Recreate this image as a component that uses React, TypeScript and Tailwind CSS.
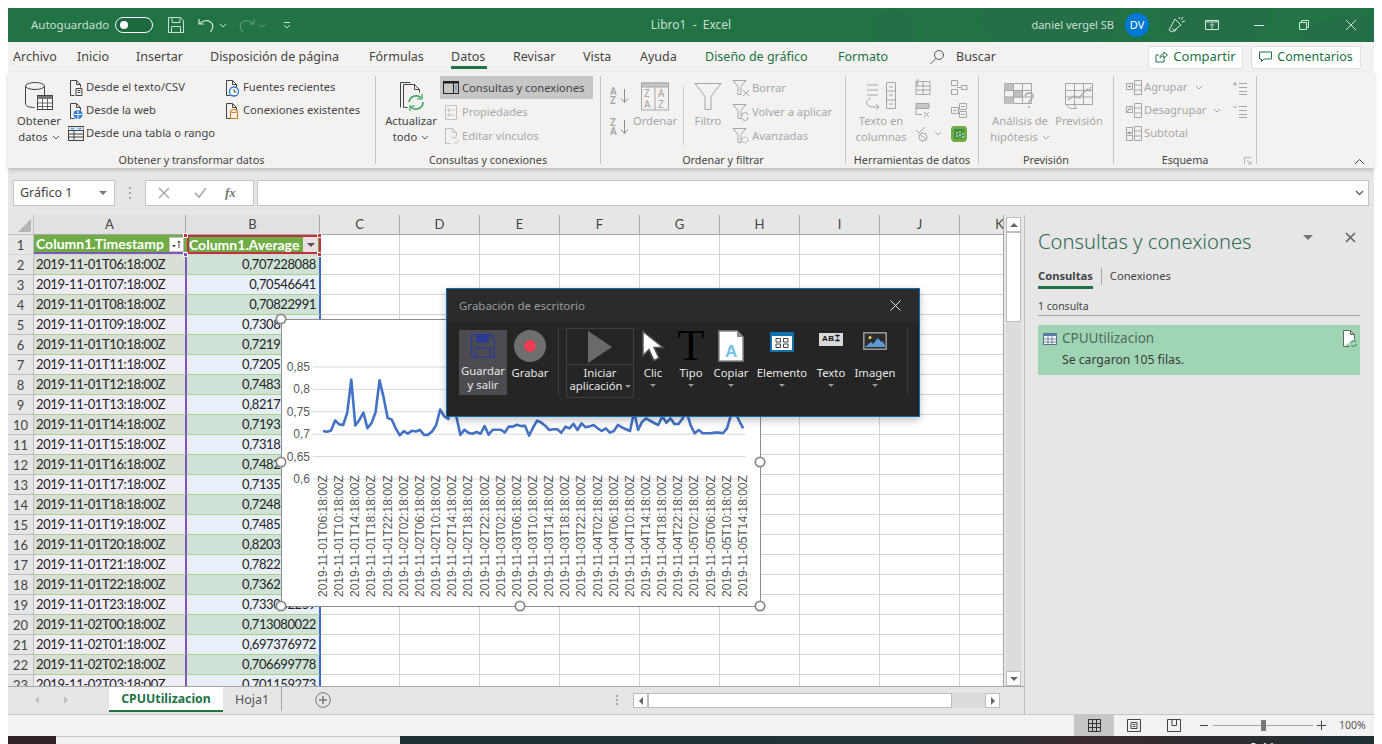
// Ventana de Excel con panel de consultas, gráfico y grabador de escritorio.
import type { ReactNode } from 'react';

const GRAY = '#a6a6a6';
const DARK = '#444444';

function Ico({ w, h, children, className = '' }: { w: number; h: number; children: ReactNode; className?: string }) {
  return (
    <svg width={w} height={h} viewBox={`0 0 ${w} ${h}`} fill="none" className={`shrink-0 ${className}`}>
      {children}
    </svg>
  );
}

function Chev({ color = '#666666' }: { color?: string }) {
  return (
    <Ico w={8} h={5} className="inline-block">
      <path d="M1 1l3 3 3-3" stroke={color} strokeWidth="1" />
    </Ico>
  );
}

/* ---------- iconos de la cinta ---------- */
function DocIco({ color = DARK, children }: { color?: string; children?: ReactNode }) {
  return (
    <Ico w={16} h={18}>
      <path d="M2.5 16.5v-15h6l4 4v3M8.5 1.5v4h4M2.5 16.500h4" stroke={color} />
      {children}
    </Ico>
  );
}

function DatabaseIco() {
  return (
    <Ico w={30} h={30}>
      <ellipse cx="11" cy="5" rx="9.5" ry="3.5" stroke={DARK} />
      <path d="M1.5 5v18c0 2 3 3.5 9 3.5" stroke={DARK} />
      <path d="M20.5 5v9" stroke={DARK} />
      <rect x="13.5" y="14.5" width="15" height="14" fill="#fff" stroke={DARK} />
      <path d="M13.5 15h15v3h-15z" fill="#777" />
      <path d="M13.5 22h15M13.5 25.5h15M18.5 18v11M23.5 18v11" stroke={DARK} strokeWidth=".8" />
    </Ico>
  );
}

function RefreshIco() {
  return (
    <Ico w={30} h={30}>
      <path d="M4.5 26.5v-25h10" stroke={DARK} />
      <path d="M7.5 26.5h4M7.5 26.5v-23h11l5 5v3M18.5 3.5v5h5" stroke={DARK} />
      <path d="M13 21a7 7 0 0 1 12-4M27 21a7 7 0 0 1-12 5" stroke="#31a15c" strokeWidth="1.5" />
      <path d="M26 13v5h-5M14 30v-5h5" stroke="#31a15c" strokeWidth="1.2" />
    </Ico>
  );
}

function TablePaneIco() {
  return (
    <Ico w={16} h={14}>
      <rect x=".5" y=".5" width="15" height="12" stroke="#222" />
      <path d="M0 .5h16v2H0z" fill="#222" />
      <path d="M10.5 1v11" stroke="#222" />
      <path d="M12 5h2M12 7h2M12 9h2" stroke="#2b7cd3" />
    </Ico>
  );
}

function FunnelIco({ mark }: { mark: ReactNode }) {
  return (
    <Ico w={18} h={18}>
      <path d="M1 1.5h13l-5 6v8h-3v-8z" stroke={GRAY} />
      {mark}
    </Ico>
  );
}

function SortIco({ top, bottom }: { top: string; bottom: string }) {
  return (
    <div className="flex h-[19px] items-center">
      <div className="flex w-[10px] flex-col text-[10px] leading-[9px] font-semibold text-[#a6a6a6]">
        <span>{top}</span>
        <span>{bottom}</span>
      </div>
      <Ico w={9} h={16}>
        <path d="M4.5 1v13M1 10.5l3.5 4 3.5-4" stroke="#8a8a8a" />
      </Ico>
    </div>
  );
}

function SmallGrayIco({ kind }: { kind: number }) {
  return (
    <Ico w={18} h={17}>
      {kind === 0 && (
        <>
          <path d="M2 2.5h14v13H2zM9 2.5v13M2 7h14M2 11h14" stroke={GRAY} />
          <path d="M4 0l-2 4h2l-1 3" stroke={GRAY} />
        </>
      )}
      {kind === 1 && (
        <>
          <path d="M2 1.5h13v5H2z" fill="#c6c6c6" stroke={GRAY} />
          <path d="M2 6.5v6h6" stroke={GRAY} />
          <path d="M10 10l5 5M15 10l-5 5" stroke={GRAY} />
        </>
      )}
      {kind === 2 && (
        <>
          <path d="M2 5l3 3 6-6" stroke={GRAY} />
          <circle cx="9" cy="12" r="4" stroke={GRAY} />
          <path d="M6 9.5l6 5" stroke={GRAY} />
        </>
      )}
      {kind === 3 && (
        <>
          <path d="M1.5 1.5h6v5h-6zM1.5 10.5h6v5h-6zM7 8.500h5" stroke={GRAY} />
          <rect x="11.500" y="6.500" width="5.500" height="4" stroke={GRAY} />
        </>
      )}
      {kind === 4 && (
        <>
          <path d="M1.500 5.500h7v6h-7zM9.500 1.500h7v6h-7zM9.500 9.500h7v6h-7z" stroke={GRAY} />
          <path d="M3 8.500h4M11 4.500h4M11 12.500h4" stroke={GRAY} />
        </>
      )}
      {kind === 5 && (
        <>
          <path d="M3 1h12l2 2v11l-2 3H3l-2-3V3z" fill="#70ad47" />
          <path d="M4 4h10v10H4z" fill="#3f8f3f" />
          <path d="M7 7v6M10 6v7M13 8v5" stroke="#fff" strokeDasharray="2 1" />
        </>
      )}
    </Ico>
  );
}

function OutlineIco({ kind }: { kind: number }) {
  return (
    <Ico w={17} h={17}>
      <path d="M9.500 1.500h7v14h-7zM9.500 6h7M9.500 11h7" stroke={GRAY} />
      <rect x="1.500" y={kind === 2 ? 2.5 : 4.5} width="6" height="6" stroke={GRAY} />
      <path d={kind === 1 ? 'M3 7.500h3M2 10l4-5' : 'M3 7.500h3M4.500 6v3'} stroke={GRAY} />
      {kind === 2 && <rect x="1.500" y="10.500" width="6" height="5" stroke={GRAY} />}
    </Ico>
  );
}

function ListIco({ sign }: { sign: string }) {
  return (
    <Ico w={15} h={14}>
      <path d={sign === '+' ? 'M1 3h4M3 1v4' : 'M1 3h4'} stroke={GRAY} />
      <path d="M7 2.500h8M7 6.500h8M7 10.500h8M7 13.500h8" stroke={GRAY} />
    </Ico>
  );
}

/* ---------- piezas de la cinta ---------- */
function BigBtn({ icon, lines, width, disabled, chev }: { icon: ReactNode; lines: string[]; width: string; disabled?: boolean; chev?: boolean }) {
  return (
    <div className={`flex shrink-0 flex-col items-center ${width} ${disabled ? 'text-[#a6a6a6]' : 'text-[#444444]'}`}>
      <div className="flex h-[37px] items-center justify-center pt-[3px]">{icon}</div>
      {lines.map((line, i) => (
        <div key={line} className="flex h-[16px] items-center gap-[4px] leading-[16px] whitespace-nowrap">
          {line}
          {chev && i === lines.length - 1 && <Chev color={disabled ? GRAY : '#555555'} />}
        </div>
      ))}
    </div>
  );
}

function SmallRow({ icon, label, iconBox = 'w-[18px]', h = 'h-[23px]', disabled }: { icon: ReactNode; label: string; iconBox?: string; h?: string; disabled?: boolean }) {
  return (
    <div className={`flex items-center whitespace-nowrap ${h} ${disabled ? 'text-[#a6a6a6]' : 'text-[#444444]'}`}>
      <span className={`flex shrink-0 items-center ${iconBox}`}>{icon}</span>
      {label}
    </div>
  );
}

function Group({ width, label, children, launcher }: { width: string; label: string; children: ReactNode; launcher?: boolean }) {
  return (
    <div className={`relative flex h-[88px] shrink-0 flex-col border-r border-[#c8c6c4] ${width}`}>
      <div className="flex h-[76px]">{children}</div>
      <div className="h-[12px] text-center text-[10.8px] leading-[16px] text-[#444444]">{label}</div>
      {launcher && (
        <svg width="8" height="8" viewBox="0 0 8 8" fill="none" className="absolute right-[4px] bottom-[-1px]">
          <path d="M.5 7V.5H7M3 3l4 4M7 4v3H4" stroke="#b0b0b0" />
        </svg>
      )}
    </div>
  );
}

const TABS = [
  { t: 'Archivo', w: 'w-[64px]' },
  { t: 'Inicio', w: 'w-[59px]' },
  { t: 'Insertar', w: 'w-[74px]' },
  { t: 'Disposición de página', w: 'w-[159px]' },
  { t: 'Fórmulas', w: 'w-[82px]' },
  { t: 'Datos', w: 'w-[62px]', active: true },
  { t: 'Revisar', w: 'w-[70px]' },
  { t: 'Vista', w: 'w-[57px]' },
  { t: 'Ayuda', w: 'w-[65px]' },
  { t: 'Diseño de gráfico', w: 'w-[133px]', green: true },
  { t: 'Formato', w: 'w-[90px]', green: true },
];

function TitleBar() {
  return (
    <div className="relative flex h-[34px] items-center overflow-hidden bg-[#217346] text-[12px] text-[#c9dfd2]">
      {/* trama decorativa del título */}
      <svg width="500" height="34" viewBox="0 0 500 34" className="absolute top-0 right-0" fill="#256f48">
        <ellipse cx="20" cy="28" rx="22" ry="26" />
        <ellipse cx="175" cy="12" rx="70" ry="30" />
        <ellipse cx="340" cy="8" rx="55" ry="34" />
        <ellipse cx="480" cy="30" rx="50" ry="22" />
      </svg>
      <span className="relative ml-[23px] w-[84px] text-[11.5px]">Autoguardado</span>
      <span className="relative flex h-[16px] w-[38px] items-center rounded-full border border-white bg-[#1d6a40] pl-[4px]">
        <span className="h-[8px] w-[8px] rounded-full bg-white" />
      </span>
      <svg width="18" height="18" viewBox="0 0 18 18" fill="none" stroke="#c9dfd2" className="relative ml-[14px]">
        <path d="M1.500 1.500h12l3 3v12h-15zM5 1.500v5h8v-5M4.500 16.500v-6h9v6" />
      </svg>
      <svg width="18" height="16" viewBox="0 0 18 16" fill="none" stroke="#d5e6dc" className="relative ml-[13px]" strokeWidth="1.200">
        <path d="M1 2v5h5M1.500 7c3-4 8-4 11-2s3 6 0 10" />
      </svg>
      <span className="relative ml-[3px]"><Chev color="#c9dfd2" /></span>
      <svg width="18" height="16" viewBox="0 0 18 16" fill="none" stroke="#5b9a78" className="relative ml-[10px]" strokeWidth="1.200">
        <path d="M17 2v5h-5M16.500 7c-3-4-8-4-11-2s-3 6 0 10" />
      </svg>
      <span className="relative ml-[3px]"><Chev color="#5b9a78" /></span>
      <svg width="8" height="8" viewBox="0 0 8 8" fill="none" stroke="#c9dfd2" className="relative ml-[17px]">
        <path d="M1 1.500h6M1 4l3 3 3-3" />
      </svg>
      <span className="absolute left-0 w-[1366px] text-center text-[12px]">Libro1&nbsp; -&nbsp; Excel</span>
      <div className="relative ml-auto flex items-center">
        <span className="text-[11px]">daniel vergel SB</span>
        <span className="ml-[11px] flex h-[24px] w-[24px] items-center justify-center rounded-full bg-[#0078d4] text-[11px] text-white">DV</span>
        <svg width="18" height="18" viewBox="0 0 18 18" fill="none" stroke="#d5e6dc" className="ml-[19px]">
          <path d="M1 14l6-11 6 6-9 7zM4.500 12.500l2 3 2-2M13 4l2-3M14 6l3-1M11 3l.5-2" />
        </svg>
        <svg width="14" height="10" viewBox="0 0 14 10" fill="none" stroke="#d5e6dc" className="ml-[19px]">
          <path d="M.5.500h13v9H.500zM.5 2h13M7 8.500V4M5 5.500L7 3.500l2 2" />
        </svg>
        <span className="ml-[35px] h-[1px] w-[10px] bg-[#d5e6dc]" />
        <svg width="10" height="10" viewBox="0 0 10 10" fill="none" stroke="#d5e6dc" className="ml-[35px]">
          <path d="M.5 2.500h7v7h-7zM2.500 2.500v-2h7v7h-2" />
        </svg>
        <svg width="10" height="10" viewBox="0 0 10 10" fill="none" stroke="#d5e6dc" className="mr-[18px] ml-[37px]">
          <path d="M0 0l10 10M10 0L0 10" />
        </svg>
      </div>
    </div>
  );
}

function TabRow() {
  return (
    <div className="flex h-[30px] items-center bg-[#f3f2f1] text-[12.5px] text-[#444444]">
      <div className="flex pl-[5px]">
        {TABS.map((tab) => (
          <div key={tab.t} className={`relative h-[30px] shrink-0 leading-[30px] whitespace-nowrap ${tab.w} ${tab.green ? 'text-[#217346]' : ''}`}>
            {tab.t}
            {tab.active && <span className="absolute bottom-[3px] left-0 h-[3px] w-[36px] bg-[#217346]" />}
          </div>
        ))}
      </div>
      <svg width="16" height="16" viewBox="0 0 16 16" fill="none" stroke="#555" className="ml-[1px]">
        <circle cx="10" cy="6" r="4.500" />
        <path d="M7 9.500L1.500 15" />
      </svg>
      <span className="ml-[11px] w-[40px]">Buscar</span>
      <div className="ml-[152px] flex h-[23px] w-[95px] items-center justify-center gap-[5px] rounded-[2px] border border-[#e1dfdd] bg-white text-[13px] text-[#217346]">
        <svg width="13" height="12" viewBox="0 0 13 12" fill="none" stroke="#217346">
          <path d="M9 6.500v4.500H1V4h3M5 7c0-3 2-4 4-4V1l3.500 3L9 7V5c-2 0-3 1-4 2z" />
        </svg>
        Compartir
      </div>
      <div className="ml-[8px] flex h-[23px] w-[110px] items-center justify-center gap-[5px] rounded-[2px] border border-[#e1dfdd] bg-white text-[12.5px] text-[#217346]">
        <svg width="13" height="12" viewBox="0 0 13 12" fill="none" stroke="#217346">
          <path d="M.5 1h12v7H5L2.500 10.500V8h-2z" />
        </svg>
        Comentarios
      </div>
    </div>
  );
}

function Ribbon() {
  return (
    <div className="relative z-10 flex h-[96px] items-start bg-[#f3f2f1] pt-[4px] text-[11.2px] shadow-[0_2px_4px_rgba(0,0,0,0.18)]">
      <Group width="w-[368px]" label="Obtener y transformar datos">
        <div className="ml-[6px]">
          <BigBtn width="w-[50px]" icon={<DatabaseIco />} lines={['Obtener', 'datos']} chev />
        </div>
        <div className="ml-[4px] w-[156px]">
          <SmallRow iconBox="w-[18px]" label="Desde el texto/CSV" icon={
            <DocIco><path d="M8 9.500h6v7H8zM9.500 11.500h3M9.500 13.500h3" stroke={DARK} /></DocIco>
          } />
          <SmallRow iconBox="w-[18px]" label="Desde la web" icon={
            <DocIco><circle cx="10" cy="12.500" r="4.500" fill="#2b7cd3" /><path d="M6 12.500h8M10 8v9" stroke="#fff" /></DocIco>
          } />
          <SmallRow iconBox="w-[18px]" label="Desde una tabla o rango" icon={
            <Ico w={16} h={15}>
              <rect x=".5" y=".5" width="15" height="14" stroke={DARK} />
              <path d="M.5 1h15v3H.500z" fill="#d6e8f7" />
              <path d="M3 2l1.500 1L6 2M10 2l1.500 1L13 2" stroke="#2b7cd3" />
              <path d="M.5 4.500h15M.5 8h15M.5 11h15M6 4.500v10" stroke={DARK} />
            </Ico>
          } />
        </div>
        <div>
          <SmallRow iconBox="w-[19px]" label="Fuentes recientes" icon={
            <DocIco><circle cx="10" cy="12.500" r="4.500" fill="#fff" stroke="#2b7cd3" strokeWidth="1.300" /><path d="M10 10v3h2.500" stroke={DARK} /></DocIco>
          } />
          <SmallRow iconBox="w-[19px]" label="Conexiones existentes" icon={
            <DocIco>
              <path d="M6.500 9.500v7h7v-7" stroke="#d9730d" />
              <ellipse cx="10" cy="9" rx="3.500" ry="1.500" stroke="#d9730d" />
            </DocIco>
          } />
        </div>
      </Group>

      <Group width="w-[225px]" label="Consultas y conexiones">
        <div className="ml-[6px]">
          <BigBtn width="w-[58px]" icon={<RefreshIco />} lines={['Actualizar', 'todo']} chev />
        </div>
        <div className="w-[153px]">
          <div className="mb-[1px] h-[23px] bg-[#c6c6c6]">
            <SmallRow h="h-[24px]" iconBox="w-[22px] pl-[3px]" label="Consultas y conexiones" icon={<TablePaneIco />} />
          </div>
          <SmallRow h="h-[24px]" iconBox="w-[22px] pl-[5px]" disabled label="Propiedades" icon={
            <Ico w={12} h={15}>
              <path d="M.5.500h11v14H.500zM3 4h2v2H3zM7 5h3M3 9h2v2H3zM7 10h3" stroke="#c0c0c0" />
            </Ico>
          } />
          <SmallRow h="h-[24px]" iconBox="w-[22px] pl-[5px]" disabled label="Editar vínculos" icon={
            <Ico w={14} h={16}>
              <path d="M.5 15.500v-15h7l4 4v4M7.500.5v4h4M.5 15.500h5" stroke="#c0c0c0" />
              <path d="M7 11a2 2 0 0 1 4 0M13 12a2 2 0 0 1-4 2" stroke="#c0c0c0" />
            </Ico>
          } />
        </div>
      </Group>

      <Group width="w-[245px]" label="Ordenar y filtrar">
        <div className="ml-[9px] flex w-[20px] flex-col pt-[10px]">
          <SortIco top="A" bottom="Z" />
          <div className="h-[12px]" />
          <SortIco top="Z" bottom="A" />
        </div>
        <BigBtn width="w-[50px]" disabled lines={['Ordenar']} icon={
          <Ico w={29} h={29}>
            <path d="M.5 1h27v27H.500z" stroke={GRAY} />
            <path d="M.5 1h27v4H.500z" fill="#c6c6c6" stroke={GRAY} />
            <path d="M14 5v23" stroke={GRAY} />
            <text x="3" y="15" fontSize="10" fill={GRAY}>Z</text>
            <text x="3" y="26" fontSize="10" fill={GRAY}>A</text>
            <text x="17" y="15" fontSize="10" fill={GRAY}>A</text>
            <text x="17" y="26" fontSize="10" fill={GRAY}>Z</text>
          </Ico>
        } />
        <div className="mt-[10px] ml-[3px] h-[59px] w-[1px] bg-[#d0d0d0]" />
        <div className="ml-[4px]">
          <BigBtn width="w-[40px]" disabled lines={['Filtro']} icon={
            <Ico w={28} h={29}>
              <path d="M1 1.500h26l-10 13v13h-6v-13z" stroke={GRAY} />
            </Ico>
          } />
        </div>
        <div className="ml-[4px]">
          <SmallRow h="h-[24px]" iconBox="w-[20px]" disabled label="Borrar" icon={<FunnelIco mark={<path d="M11 11l6 6M17 11l-6 6" stroke={GRAY} />} />} />
          <SmallRow h="h-[24px]" iconBox="w-[20px]" disabled label="Volver a aplicar" icon={<FunnelIco mark={<path d="M10 13a3 3 0 0 1 6-1M16 14a3 3 0 0 1-6 1" stroke={GRAY} />} />} />
          <SmallRow h="h-[24px]" iconBox="w-[20px]" disabled label="Avanzadas" icon={<FunnelIco mark={<circle cx="13" cy="13" r="3" stroke={GRAY} strokeDasharray="2 1" />} />} />
        </div>
      </Group>

      <Group width="w-[133px]" label="Herramientas de datos">
        <div className="ml-[2px]">
          <BigBtn width="w-[66px]" disabled lines={['Texto en', 'columnas']} icon={
            <Ico w={32} h={28}>
              <path d="M2 3h11M2 8h11M2 13h11" stroke={GRAY} />
              <path d="M21.500.5h9v26h-9zM21.500 9h9M21.500 18h9M24 5h4M24 13h4M24 22h4" stroke={GRAY} />
              <path d="M6 16c-6 3-6 7 0 9h8M11 22l3 3-3 3" stroke={GRAY} />
            </Ico>
          } />
        </div>
        <div className="flex w-[36px] flex-col">
          {[0, 1, 2].map((k) => (
            <div key={k} className="flex h-[23px] items-center gap-[2px]">
              <SmallGrayIco kind={k} />
              {k === 2 && <Chev color={GRAY} />}
            </div>
          ))}
        </div>
        <div className="flex flex-col">
          {[3, 4, 5].map((k) => (
            <div key={k} className="flex h-[23px] items-center">
              <SmallGrayIco kind={k} />
            </div>
          ))}
        </div>
      </Group>

      <Group width="w-[135px]" label="Previsión">
        <div className="ml-[6px]">
          <BigBtn width="w-[70px]" disabled lines={['Análisis de', 'hipótesis']} chev icon={
            <Ico w={32} h={28}>
              <path d="M.5 1.500h27v20H.500z" stroke={GRAY} />
              <path d="M.5 1.500h9v7h-9zM.5 15h9v7h-9zM9.500 8.500h9v7h-9z" fill="#c0c0c0" />
              <path d="M9.500 1.500v20M18.500 1.500v20M.5 8.500h27M.5 15h27" stroke={GRAY} />
              <path d="M21 14c1-4 8-4 8 0 0 3-4 3-4 7M25 24v2" stroke={GRAY} strokeWidth="1.400" />
            </Ico>
          } />
        </div>
        <BigBtn width="w-[48px]" disabled lines={['Previsión']} icon={
          <Ico w={29} h={27}>
            <path d="M.5.500h27v21H.500zM.5 7.500h27M.5 14h27M9.500.5v21M18.500.5v21" stroke={GRAY} />
            <path d="M3 17l6-4 5 2 8-9 2 2 2-4" stroke={GRAY} strokeWidth="1.200" />
            <path d="M.5 21.500l5 4h6l-3-4" stroke={GRAY} />
          </Ico>
        } />
      </Group>

      <Group width="w-[143px]" label="Esquema" launcher>
        <div className="ml-[11px] w-[122px] text-[#a6a6a6]">
          <div className="flex h-[23px] items-center">
            <span className="w-[19px]"><OutlineIco kind={0} /></span>
            <span className="w-[51px]">Agrupar</span>
            <Chev color={GRAY} />
            <span className="ml-auto"><ListIco sign="+" /></span>
          </div>
          <div className="flex h-[23px] items-center">
            <span className="w-[19px]"><OutlineIco kind={1} /></span>
            <span className="w-[69px]">Desagrupar</span>
            <Chev color={GRAY} />
            <span className="ml-auto"><ListIco sign="-" /></span>
          </div>
          <div className="flex h-[23px] items-center">
            <span className="w-[19px]"><OutlineIco kind={2} /></span>
            <span>Subtotal</span>
          </div>
        </div>
      </Group>

      <div className="mt-[82px] mr-[9px] ml-auto">
        <svg width="11" height="7" viewBox="0 0 11 7" fill="none" stroke="#444">
          <path d="M1 6l4.500-4.500L10 6" />
        </svg>
      </div>
    </div>
  );
}

function FormulaBar() {
  return (
    <div className="flex h-[47px] items-center bg-[#e6e6e6] pt-[3px] text-[12.5px] text-[#444444]">
      <div className="ml-[5px] flex h-[26px] w-[102px] items-center justify-between border border-[#c6c6c6] bg-white pr-[7px] pl-[6px]">
        Gráfico 1
        <span className="h-0 w-0 border-x-[4px] border-t-[4px] border-x-transparent border-t-[#777777]" />
      </div>
      <div className="ml-[14px] flex h-[12px] w-[2px] flex-col justify-between">
        <span className="h-[2px] bg-[#a6a6a6]" />
        <span className="h-[2px] bg-[#a6a6a6]" />
        <span className="h-[2px] bg-[#a6a6a6]" />
      </div>
      <div className="ml-[14px] flex h-[26px] w-[109px] items-center border border-[#c6c6c6] bg-white pl-[12px] text-[#777777]">
        <svg width="12" height="12" viewBox="0 0 12 12" fill="none" stroke="#a6a6a6" strokeWidth="1.400">
          <path d="M1 1l10 10M11 1L1 11" />
        </svg>
        <svg width="13" height="12" viewBox="0 0 13 12" fill="none" stroke="#b5b5b5" strokeWidth="2" className="ml-[24px]">
          <path d="M1 6l4 4 7-9" />
        </svg>
        <span className="ml-[18px] font-['Liberation_Serif',serif] text-[13px] font-bold italic">fx</span>
      </div>
      <div className="ml-[3px] flex h-[26px] w-[1112px] items-center justify-end border border-[#c6c6c6] bg-white pr-[4px]">
        <svg width="9" height="6" viewBox="0 0 9 6" fill="none" stroke="#666" strokeWidth="1.500">
          <path d="M1 1l3.500 3.500L8 1" />
        </svg>
      </div>
    </div>
  );
}

/* ---------- hoja ---------- */
const VALUES = [
  '0,707228088', '0,70546641', '0,70822991', '0,730812259', '0,721912259', '0,720512259', '0,748312259',
  '0,821712259', '0,719312259', '0,731812259', '0,748212259', '0,713512259', '0,724812259', '0,748512259',
  '0,820312259', '0,782212259', '0,736212259', '0,733082259', '0,713080022', '0,697376972', '0,706699778',
  '0,701159273',
];

const stamp = (i: number) => {
  const h = i + 6;
  const day = h < 24 ? '01' : '02';
  return `2019-11-${day}T${String(h % 24).padStart(2, '0')}:18:00Z`;
};

const EXTRA = ['C', 'D', 'E', 'F', 'G', 'H', 'I', 'J', 'K'];

function Sheet() {
  return (
    <div className="relative w-[996px] shrink-0 overflow-hidden border-r border-[#a6a6a6] bg-white font-['Lato',sans-serif] text-[13px] text-[#222222]">
      <div className="flex h-[20px] bg-[#e6e6e6] text-[#444444]">
        <div className="relative w-[26px] shrink-0 border-r border-b border-[#bdbdbd]">
          <span className="absolute right-[2px] bottom-[2px] h-0 w-0 border-b-[13px] border-l-[13px] border-b-[#b5b5b5] border-l-transparent" />
        </div>
        <div className="w-[152px] shrink-0 border-r border-b border-[#a6a6a6] bg-[#e1e1e1] text-center leading-[19px]">A</div>
        <div className="w-[134px] shrink-0 border-r border-b border-[#a6a6a6] bg-[#e1e1e1] text-center leading-[19px]">B</div>
        {EXTRA.map((c) => (
          <div key={c} className="w-[80px] shrink-0 border-r border-b border-[#a6a6a6] text-center leading-[19px]">{c}</div>
        ))}
      </div>
      {/* fila de encabezados de la tabla */}
      <div className="flex h-[20px] border-b border-[#d4d4d4]">
        <div className="w-[26px] shrink-0 border-r border-[#bdbdbd] bg-[#e6e6e6] pt-[1px] text-center leading-[19px] text-[#444444]">1</div>
        <div className="relative flex w-[153px] shrink-0 items-center border-b-2 border-[#7e57b8] bg-[#70ad47] pl-[2px] text-[14px] font-bold text-white">
          Column1.Timestamp
          <span className="absolute top-[2px] right-[3px] flex h-[15px] w-[15px] items-center justify-center border border-[#bfbfbf] bg-white">
            <svg width="11" height="11" viewBox="0 0 11 11" fill="none">
              <path d="M1 6h4L3 8.500z" fill="#444" />
              <path d="M8 9V2M6.500 3.500L8 2l1.500 1.500" stroke="#444" />
            </svg>
          </span>
        </div>
        <div className="relative flex w-[134px] shrink-0 items-center border-2 border-[#c0313d] bg-[#70ad47] text-[14px] font-bold text-white">
          Column1.Average
          <span className="absolute top-[0px] right-[1px] flex h-[15px] w-[15px] items-center justify-center bg-[#ecdfe3]">
            <span className="h-0 w-0 border-x-[4px] border-t-[4px] border-x-transparent border-t-[#555555]" />
          </span>
        </div>
        {EXTRA.map((c) => (
          <div key={c} className={`shrink-0 border-r border-[#d4d4d4] ${c === 'C' ? 'w-[79px]' : 'w-[80px]'}`} />
        ))}
      </div>
      {VALUES.map((v, i) => (
        <div key={i} className="flex h-[20px]">
          <div className="w-[26px] shrink-0 border-r border-b border-[#bdbdbd] bg-[#e6e6e6] pt-[1px] text-center leading-[18px] text-[#444444]">{i + 2}</div>
          <div className={`flex w-[153px] shrink-0 items-center border-r-2 border-b border-r-[#7e57b8] border-b-[#a9d08e] pt-[1px] pl-[2px] tracking-[-0.4px] ${i % 2 === 0 ? 'bg-[#d8e0d5]' : 'bg-[#efecf6]'}`}>
            {stamp(i)}
          </div>
          <div className={`flex w-[134px] shrink-0 items-center justify-end border-r-2 border-b border-r-[#3a6bc4] border-b-[#a9d08e] pt-[1px] pr-[3px] tracking-[-0.4px] ${i % 2 === 0 ? 'bg-[#d0e2d6]' : 'bg-[#e8eff9]'}`}>
            {v}
          </div>
          {EXTRA.map((c) => (
            <div key={c} className={`shrink-0 border-r border-b border-[#d4d4d4] ${c === 'C' ? 'w-[79px]' : 'w-[80px]'}`} />
          ))}
        </div>
      ))}
      {/* tiradores de los rangos del gráfico */}
      <span className="absolute top-[37px] left-[175px] h-[5px] w-[5px] border border-white bg-[#7e57b8]" />
      <span className="absolute top-[37px] left-[309px] h-[5px] w-[5px] border border-white bg-[#c0313d]" />
      <span className="absolute top-[18px] left-[175px] h-[5px] w-[5px] border border-white bg-[#c0313d]" />
      <span className="absolute top-[18px] left-[309px] h-[5px] w-[5px] border border-white bg-[#c0313d]" />
    </div>
  );
}

function ScrollBtn({ dir }: { dir: 'up' | 'down' | 'left' | 'right' }) {
  const tri = {
    up: 'border-x-[4px] border-b-[4px] border-x-transparent border-b-[#666666]',
    down: 'border-x-[4px] border-t-[4px] border-x-transparent border-t-[#666666]',
    left: 'border-y-[4px] border-r-[4px] border-y-transparent border-r-[#666666]',
    right: 'border-y-[4px] border-l-[4px] border-y-transparent border-l-[#666666]',
  }[dir];
  return (
    <span className="flex h-[15px] w-[15px] shrink-0 items-center justify-center border border-[#bdbdbd] bg-white">
      <span className={`h-0 w-0 ${tri}`} />
    </span>
  );
}

function VScroll() {
  return (
    <div className="ml-[2px] flex w-[15px] flex-col pt-[2px]">
      <ScrollBtn dir="up" />
      <div className="h-[90px] border border-[#bdbdbd] bg-white" />
      <div className="flex-1 bg-[#dcdcdc]" />
      <ScrollBtn dir="down" />
    </div>
  );
}

function SheetTabs() {
  return (
    <div className="flex h-[28px] items-start border-t border-[#a6a6a6] bg-[#e6e6e6] font-['Noto_Sans',sans-serif] text-[12.5px] text-[#555555]">
      <span className="mt-[9px] ml-[27px] h-0 w-0 border-y-[4px] border-r-[4px] border-y-transparent border-r-[#c0c0c0]" />
      <span className="mt-[9px] ml-[25px] h-0 w-0 border-y-[4px] border-l-[4px] border-y-transparent border-l-[#c0c0c0]" />
      <div className="ml-[41px] flex h-[25px] w-[114px] items-center justify-center border-b-[2px] border-[#217346] bg-white pt-[2px] text-[12.3px] font-bold text-[#217346]">
        CPUUtilizacion
      </div>
      <div className="flex h-[24px] w-[59px] items-center justify-center border-r border-[#a6a6a6] pt-[2px]">Hoja1</div>
      <svg width="16" height="16" viewBox="0 0 16 16" fill="none" stroke="#777" className="mt-[5px] ml-[33px]">
        <circle cx="8" cy="8" r="7.300" />
        <path d="M8 4v8M4 8h8" strokeWidth="1.500" />
      </svg>
      <div className="mt-[5px] ml-[285px] flex h-[15px] w-[2px] flex-col justify-center gap-[2px]">
        <span className="h-[2px] bg-[#a6a6a6]" />
        <span className="h-[2px] bg-[#a6a6a6]" />
        <span className="h-[2px] bg-[#a6a6a6]" />
      </div>
      <div className="mt-[6px] ml-[15px] flex w-[367px]">
        <ScrollBtn dir="left" />
        <div className="w-[304px] border border-[#bdbdbd] bg-white" />
        <div className="flex-1 bg-[#dcdcdc]" />
        <ScrollBtn dir="right" />
      </div>
    </div>
  );
}

function QueryPane() {
  return (
    <div className="flex w-[350px] flex-col border-l border-[#bdbdbd] bg-[#e6e6e6] pr-[14px] pl-[13px] font-['Noto_Sans',sans-serif] text-[#444444]">
      <div className="flex h-[53px] items-center">
        <span className="text-[20.2px] font-light text-[#2f6a52]">Consultas y conexiones</span>
        <span className="mb-[8px] ml-auto h-0 w-0 border-x-[5px] border-t-[5px] border-x-transparent border-t-[#777777]" />
        <svg width="11" height="11" viewBox="0 0 11 11" fill="none" stroke="#666" strokeWidth="1.700" className="mr-[4px] mb-[8px] ml-[32px]">
          <path d="M1 1l9 9M10 1l-9 9" />
        </svg>
      </div>
      <div className="flex h-[21px] items-start text-[11.2px]">
        <span className="h-[21px] border-b-[3px] border-[#217346] leading-[16px] font-bold">Consultas</span>
        <span className="mx-[8px] h-[17px] w-[1px] bg-[#a6a6a6]" />
        <span className="leading-[16px]">Conexiones</span>
      </div>
      <div className="mt-[10px] h-[17px] border-b border-[#a6a6a6] text-[10.5px] leading-[14px]">1 consulta</div>
      <div className="mt-[9px] flex h-[50px] flex-col bg-[#9fd5b5] pr-[3px] pl-[5px]">
        <div className="flex h-[27px] items-center">
          <svg width="14" height="12" viewBox="0 0 14 12" fill="none" className="mr-[5px]">
            <rect x=".5" y=".5" width="13" height="11" fill="#f3f6fb" stroke="#5b6f88" />
            <path d="M0 .5h14v2.500H0z" fill="#5b7ea8" />
            <path d="M.5 6h13M.5 9h13M5 3v9M9 3v9" stroke="#5b6f88" strokeWidth=".8" />
          </svg>
          <span className="text-[13.5px] text-[#4d6b5c]">CPUUtilizacion</span>
          <svg width="15" height="17" viewBox="0 0 15 17" fill="none" className="mb-[1px] ml-auto">
            <path d="M1.500 16.500v-16h7l4 4v5M8.500.5v4h4M1.500 16.500h6" fill="#fff" stroke="#666" />
            <path d="M9 13a3 3 0 0 1 5-1.500M14.500 14a3 3 0 0 1-5 1.500" stroke="#4fa06f" strokeWidth="1.300" />
          </svg>
        </div>
        <div className="pl-[19px] text-[12.2px] leading-[16px] text-[#3a3a3a]">Se cargaron 105 filas.</div>
      </div>
    </div>
  );
}

function StatusBar() {
  return (
    <div className="flex h-[22px] items-center border-t border-[#c6c6c6] bg-[#f3f2f1] font-['Noto_Sans',sans-serif] text-[10.5px] text-[#555555]">
      <div className="ml-[1066px] flex h-[21px] w-[40px] items-center justify-center bg-[#c6c6c6]">
        <svg width="13" height="13" viewBox="0 0 13 13" fill="none" stroke="#333">
          <path d="M.5.500h12v12H.500zM4.500.5v12M8.500.5v12M.5 4.500h12M.5 8.500h12" />
        </svg>
      </div>
      <div className="flex h-[21px] w-[40px] items-center justify-center">
        <svg width="14" height="13" viewBox="0 0 14 13" fill="none" stroke="#444">
          <path d="M.5.500h13v12H.500zM4 3.500h6v6H4zM5.500 5.500h3M5.500 7.500h3" />
        </svg>
      </div>
      <div className="flex h-[21px] w-[40px] items-center justify-center">
        <svg width="14" height="13" viewBox="0 0 14 13" fill="none" stroke="#444">
          <path d="M.5.500h13v12H.500zM5 .5v6h4.500V.500" />
        </svg>
      </div>
      <span className="ml-[6px] h-[1px] w-[8px] bg-[#444444]" />
      <div className="relative ml-[5px] flex h-[11px] w-[100px] items-center">
        <span className="h-[1px] w-full bg-[#a6a6a6]" />
        <span className="absolute left-[48px] h-[11px] w-[5px] bg-[#7a7a7a]" />
      </div>
      <svg width="9" height="9" viewBox="0 0 9 9" fill="none" stroke="#444" className="ml-[4px]">
        <path d="M0 4.500h9M4.500 0v9" />
      </svg>
      <span className="ml-[13px]">100%</span>
    </div>
  );
}

/* ---------- gráfico ---------- */
const SERIES = [
  0.7072, 0.7055, 0.7082, 0.7308, 0.7219, 0.7205, 0.7483, 0.8217, 0.7193, 0.7318, 0.7482, 0.7135, 0.7248, 0.7485, 0.8203,
  0.7822, 0.7362, 0.733, 0.7131, 0.6974, 0.7067, 0.7012, 0.7075, 0.706, 0.7095, 0.6985, 0.6985, 0.706, 0.72, 0.755, 0.74,
  0.734, 0.775, 0.74, 0.6985, 0.71, 0.703, 0.701, 0.705, 0.701, 0.718, 0.699, 0.71, 0.71, 0.71, 0.704, 0.717, 0.717, 0.721,
  0.718, 0.719, 0.697, 0.715, 0.7302, 0.726, 0.719, 0.7094, 0.7109, 0.7109, 0.7035, 0.7168, 0.7131, 0.7228, 0.7094, 0.7243,
  0.7154, 0.7175, 0.7206, 0.713, 0.7072, 0.7131, 0.7035, 0.7072, 0.7206, 0.715, 0.711, 0.7072, 0.75, 0.7094, 0.728, 0.7354,
  0.73, 0.725, 0.7206, 0.74, 0.7257, 0.7354, 0.7228, 0.7228, 0.735, 0.75, 0.72, 0.702, 0.7094, 0.702, 0.702, 0.702, 0.7035,
  0.7035, 0.702, 0.7131, 0.7429, 0.75, 0.73, 0.7131,
];

const AXIS = [0.85, 0.8, 0.75, 0.7, 0.65, 0.6];
const axisY = (v: number) => 479 - ((v - 0.6) / 0.05) * 22.4;
const LABELS = Array.from({ length: 27 }, (_, i) => {
  const total = 6 + i * 4;
  const day = String(1 + Math.floor(total / 24)).padStart(2, '0');
  const hour = String(total % 24).padStart(2, '0');
  return `2019-11-${day}T${hour}:18:00Z`;
});
const HANDLES: [number, number][] = [[281, 319], [281, 462], [281, 606], [520, 606], [760, 606], [760, 462]];

function Chart() {
  const points = SERIES.map((v, i) => `${323 + i * 4.04},${axisY(v)}`).join(' ');
  return (
    <svg
      width="480"
      height="288"
      viewBox="281 319 480 288"
      className="absolute top-[319px] left-[281px] overflow-visible"
      fontFamily="'Liberation Sans', sans-serif"
      fontSize="12"
      fill="#595959"
    >
      <rect x="281.500" y="319.500" width="479" height="287" fill="#fff" stroke="#8c8c8c" />
      {AXIS.map((v) => (
        <g key={v}>
          <line x1="313" x2="746" y1={axisY(v)} y2={axisY(v)} stroke="#d9d9d9" />
          <text x="310" y={axisY(v) + 4} textAnchor="end">{String(v).replace('.', ',')}</text>
        </g>
      ))}
      <polyline points={points} fill="none" stroke="#4472c4" strokeWidth="2.600" strokeLinejoin="round" />
      {LABELS.map((l, i) => {
        const x = 327 + i * 16.15;
        return <text key={l} x={x} y="597" transform={`rotate(-90 ${x} 597)`}>{l}</text>;
      })}
      {HANDLES.map(([x, y]) => (
        <circle key={`${x}-${y}`} cx={x} cy={y} r="4.700" fill="#fff" stroke="#8c8c8c" strokeWidth="1.800" />
      ))}
    </svg>
  );
}

/* ---------- grabador ---------- */
function ToolItem({ width, icon, label }: { width: string; icon: ReactNode; label: string }) {
  return (
    <div className={`flex shrink-0 flex-col items-center ${width}`}>
      <div className="flex h-[41px] items-center justify-center pt-[3px]">{icon}</div>
      <div className="h-[16px] leading-[16px] whitespace-nowrap">{label}</div>
      <span className="mt-[3px] h-0 w-0 border-x-[3px] border-t-[3px] border-x-transparent border-t-[#999999]" />
    </div>
  );
}

function Recorder() {
  return (
    <div className="absolute top-[288px] left-[446px] h-[129px] w-[474px] border border-[#0f6cad] bg-[#252525] font-['Noto_Sans',sans-serif] text-[11.3px] text-[#e6e6e6] shadow-[0_3px_8px_rgba(0,0,0,0.25)]">
      <div className="flex h-[33px] items-center justify-between bg-[#2b2b2b] pr-[18px] pl-[12px] text-[11.5px] text-[#9c9c9c]">
        Grabación de escritorio
        <svg width="11" height="11" viewBox="0 0 11 11" fill="none" stroke="#e8e8e8">
          <path d="M.5.500l10 10M10.500.5l-10 10" />
        </svg>
      </div>
      <div className="flex pt-[8px] pl-[12px]">
        <div className="flex h-[65px] w-[48px] shrink-0 flex-col items-center bg-[#4c4c50] pt-[4px] text-center leading-[15px]">
          <svg width="24" height="24" viewBox="0 0 24 24" fill="none" stroke="#2a3b96" strokeWidth="1.300">
            <path d="M.7.700h19l3.600 3.600v19H.700z" />
            <path d="M6 1v7h11V1" fill="#2a3b96" />
            <path d="M5 23v-9h14v9" />
          </svg>
          <div className="mt-[5px]">Guardar</div>
          <div className="mt-[-1px]">y salir</div>
        </div>
        <div className="flex w-[46px] shrink-0 flex-col items-center">
          <span className="flex h-[32px] w-[32px] items-center justify-center rounded-full bg-[#6e6e6e]">
            <span className="h-[12px] w-[12px] rounded-full bg-[#ef3c56]" />
          </span>
          <div className="mt-[3px]">Grabar</div>
        </div>
        <div className="mt-[-2px] ml-[5px] h-[67px] w-[1px] bg-[#3a3a3a]" />
        <div className="mt-[-2px] ml-[7px] flex h-[70px] w-[68px] shrink-0 flex-col items-center border border-[#3e3e3e]">
          <div className="flex h-[36px] w-full items-center justify-center border-b border-[#3e3e3e]">
            <span className="h-0 w-0 border-y-[16px] border-l-[24px] border-y-transparent border-l-[#6a6a6a]" />
          </div>
          <div className="pt-[1px] text-center leading-[13px]">
            Iniciar
            <br />
            aplicación
            <span className="ml-[2px] inline-block h-0 w-0 border-x-[3px] border-t-[3px] border-x-transparent border-t-[#999999] align-middle" />
          </div>
        </div>
        <div className="mt-[-6px] flex">
          <ToolItem width="w-[38px]" label="Clic" icon={
            <svg width="24" height="33" viewBox="0 0 24 33" stroke="#555">
              <path d="M2 1.500v24l6-6 5 11 5-2.500-5-10.500h9z" fill="#fff" strokeWidth="1.500" />
            </svg>
          } />
          <ToolItem width="w-[38px]" label="Tipo" icon={
            <span className="font-['Liberation_Serif',serif] text-[44px] leading-[34px] text-black">T</span>
          } />
          <ToolItem width="w-[42px]" label="Copiar" icon={
            <svg width="26" height="32" viewBox="0 0 26 32" fill="none">
              <path d="M1 1h18l6 6v24H1z" fill="#fff" stroke="#8a8a8a" strokeWidth="1.500" />
              <path d="M19 1v6h6z" fill="#8a8a8a" />
              <text x="7" y="27" fontFamily="'Liberation Sans', sans-serif" fontSize="17" fontWeight="700" fill="#73c0ea">A</text>
            </svg>
          } />
          <ToolItem width="w-[60px]" label="Elemento" icon={
            <svg width="24" height="20" viewBox="0 0 24 20" fill="none" className="mb-[8px]">
              <path d="M0 0h24v20H0z" fill="#1170ae" />
              <path d="M2 4h20v14H2z" fill="#fff" />
              <path d="M6 6.500h4.500v3.500H6zM13.500 6.500H18v3.500h-4.500zM6 12h4.500v3.500H6zM13.500 12H18v3.500h-4.500z" stroke="#444" />
            </svg>
          } />
          <ToolItem width="w-[38px]" label="Texto" icon={
            <div className="mb-[14px] flex h-[13px] w-[24px] items-center justify-center bg-[#d9d9d9] font-['Liberation_Sans',sans-serif] text-[8px] font-bold tracking-[0.5px] text-[#111111]">AB⌶</div>
          } />
          <ToolItem width="w-[50px]" label="Imagen" icon={
            <svg width="24" height="18" viewBox="0 0 24 18" fill="none" className="mb-[10px]">
              <rect x=".8" y=".8" width="22.400" height="16.400" fill="#2d2d2d" stroke="#9a9a9a" strokeWidth="1.500" />
              <circle cx="7" cy="5.500" r="1.500" fill="#f0d55a" />
              <path d="M2 15l6-5 2 2 5-6 3 4 1-1 3 4v2H2z" fill="#5b9bd5" />
            </svg>
          } />
        </div>
        <div className="mt-[-2px] ml-[7px] h-[67px] w-[1px] bg-[#3a3a3a]" />
      </div>
    </div>
  );
}

export default function App() {
  return (
    <div className="relative h-[744px] w-[1382px] overflow-hidden bg-white font-['Noto_Sans',sans-serif]">
      <div className="mx-[8px] flex h-[744px] flex-col pt-[8px]">
        <TitleBar />
        <TabRow />
        <Ribbon />
        <FormulaBar />
        <div className="flex h-[499px]">
          <div className="flex w-[1016px] flex-col bg-[#e6e6e6]">
            <div className="flex h-[471px] overflow-hidden">
              <Sheet />
              <VScroll />
            </div>
            <SheetTabs />
          </div>
          <QueryPane />
        </div>
        <StatusBar />
        <div className="flex h-[8px] overflow-hidden text-[12px] text-white">
          <div className="w-[48px] bg-[#2e2226]" />
          <div className="w-[344px] border-t border-[#c6c6c6] bg-[#f3f2f1]" />
          <div className="flex flex-1 justify-end bg-[linear-gradient(90deg,#1f2f33,#243438_55%,#3a2a30_70%,#1f3033)] pt-[3px] pr-[100px]">3:44</div>
        </div>
      </div>
      <Chart />
      <Recorder />
    </div>
  );
}
